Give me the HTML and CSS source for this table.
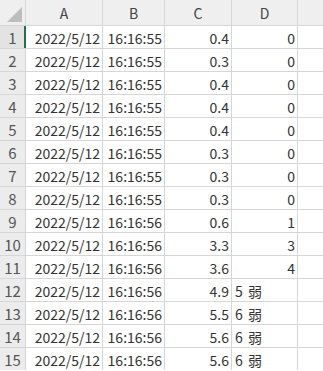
FILE: index.html
```html
<!DOCTYPE html>
<html>
<head>
<meta charset="utf-8">
<link rel="stylesheet" href="styles.css">
</head>
<body>
<div class="sheet">
  <div class="corner"><svg width="25" height="25" viewBox="0 0 25 25"><polygon points="22,7 22,22 7,22" fill="#bdbdbd"/></svg></div>
  <div class="ch">A</div><div class="ch">B</div><div class="ch">C</div><div class="ch">D</div><div class="ch"></div>

  <div class="rh active">1</div><div class="c">2022/5/12</div><div class="c">16:16:55</div><div class="c">0.4</div><div class="c">0</div><div class="c"></div>
  <div class="rh">2</div><div class="c">2022/5/12</div><div class="c">16:16:55</div><div class="c">0.3</div><div class="c">0</div><div class="c"></div>
  <div class="rh">3</div><div class="c">2022/5/12</div><div class="c">16:16:55</div><div class="c">0.4</div><div class="c">0</div><div class="c"></div>
  <div class="rh">4</div><div class="c">2022/5/12</div><div class="c">16:16:55</div><div class="c">0.4</div><div class="c">0</div><div class="c"></div>
  <div class="rh">5</div><div class="c">2022/5/12</div><div class="c">16:16:55</div><div class="c">0.4</div><div class="c">0</div><div class="c"></div>
  <div class="rh">6</div><div class="c">2022/5/12</div><div class="c">16:16:55</div><div class="c">0.3</div><div class="c">0</div><div class="c"></div>
  <div class="rh">7</div><div class="c">2022/5/12</div><div class="c">16:16:55</div><div class="c">0.3</div><div class="c">0</div><div class="c"></div>
  <div class="rh">8</div><div class="c">2022/5/12</div><div class="c">16:16:55</div><div class="c">0.3</div><div class="c">0</div><div class="c"></div>
  <div class="rh">9</div><div class="c">2022/5/12</div><div class="c">16:16:56</div><div class="c">0.6</div><div class="c">1</div><div class="c"></div>
  <div class="rh">10</div><div class="c">2022/5/12</div><div class="c">16:16:56</div><div class="c">3.3</div><div class="c">3</div><div class="c"></div>
  <div class="rh">11</div><div class="c">2022/5/12</div><div class="c">16:16:56</div><div class="c">3.6</div><div class="c">4</div><div class="c"></div>
  <div class="rh">12</div><div class="c">2022/5/12</div><div class="c">16:16:56</div><div class="c">4.9</div><div class="c t">5 弱</div><div class="c"></div>
  <div class="rh">13</div><div class="c">2022/5/12</div><div class="c">16:16:56</div><div class="c">5.5</div><div class="c t">6 弱</div><div class="c"></div>
  <div class="rh">14</div><div class="c">2022/5/12</div><div class="c">16:16:56</div><div class="c">5.6</div><div class="c t">6 弱</div><div class="c"></div>
  <div class="rh">15</div><div class="c">2022/5/12</div><div class="c">16:16:56</div><div class="c">5.6</div><div class="c t">6 弱</div><div class="c"></div>
</div>
</body>
</html>
```
FILE: styles.css
```css
html, body {
  margin: 0;
  padding: 0;
  background: #ffffff;
  overflow: hidden;
}
.sheet {
  display: grid;
  grid-template-columns: 25px 76px 61px 66px 65px 30px;
  grid-template-rows: 25px repeat(15, 22px);
  gap: 1px;
  background: #d6d6d6;
  width: 330px;
  font-family: "Noto Sans CJK JP", "Noto Sans", sans-serif;
  font-size: 14px;
  color: #333333;
}
.corner {
  background: #efefef;
  display: flex;
}
.ch {
  background: #efefef;
  color: #444444;
  display: flex;
  align-items: center;
  justify-content: center;
  line-height: 25px;
  padding-top: 1px;
}
.rh {
  background: #ececec;
  color: #555555;
  font-size: 15px;
  display: flex;
  align-items: center;
  justify-content: center;
  position: relative;
}
.rh.active {
  background: #e3e3e3;
}
.rh.active::after {
  content: "";
  position: absolute;
  right: -1px;
  top: 0;
  bottom: 0;
  width: 2px;
  background: #217346;
}
.c {
  background: #ffffff;
  display: flex;
  align-items: center;
  justify-content: flex-end;
  padding: 1px 2px 0 3px;
  white-space: nowrap;
  overflow: hidden;
}
.c.t {
  justify-content: flex-start;
  word-spacing: 2px;
}
```
